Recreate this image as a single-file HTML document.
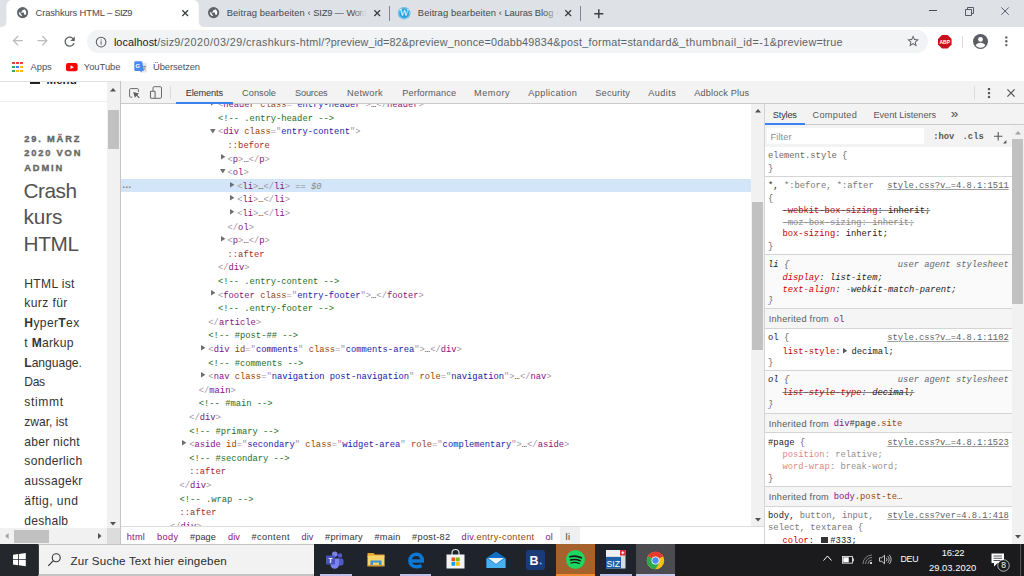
<!DOCTYPE html>
<html lang="de"><head><meta charset="utf-8"><title>Crashkurs HTML – SIZ9</title>
<style>
html,body{margin:0;padding:0;}
body{width:1024px;height:576px;overflow:hidden;position:relative;background:#fff;font-family:"Liberation Sans",sans-serif;}
#root{position:absolute;left:0;top:0;width:1024px;height:576px;overflow:hidden;}
.tg{color:#881280}.br{color:#a894a6}.an{color:#994500}.av{color:#1a1aa6}.cm{color:#236e25}.ps{color:#a52a2a}
.pn{color:#c80000}.pv{color:#222}.gr{color:#888}
svg{position:absolute;overflow:visible}
</style></head>
<body><div id="root">
<div style="position:absolute;left:0px;top:0px;width:1024px;height:27px;background:#dee1e6;"></div>
<svg style="left:0;top:0" width="210" height="27" viewBox="0 0 210 27"><path d="M0 27 C4.200 27 6.500 25 6.500 21 L6.500 6.500 C6.500 2.500 8.500 0 12.500 0 L192.500 0 C196.500 0 198.800 2.500 198.800 6.500 L198.800 21 C198.800 25 201 27 205.200 27 Z" fill="#fff"/></svg>
<div style="position:absolute;left:0px;top:27px;width:1024px;height:54px;background:#fff;"></div>
<div style="position:absolute;left:0px;top:81px;width:120px;height:1px;background:#e0e0e0;"></div>
<svg style="left:16.700000000000003px;top:7.300000000000001px" width="11.2" height="11.2" viewBox="0 0 24 24"><circle cx="12" cy="12" r="12" fill="#5f6368"/><path d="M11 21.9c-4-.5-7-3.900-7-7.900 0-.6.1-1.200.2-1.800L9 17v1c0 1.100.9 2 2 2v1.900zm6.900-2.500c-.3-.8-1-1.400-1.900-1.400h-1v-3c0-.6-.4-1-1-1H8v-2h2c.6 0 1-.4 1-1V9h2c1.100 0 2-.9 2-2v-.4c2.900 1.200 5 4.100 5 7.400 0 2.100-.8 4-2.100 5.400z" fill="#fff" transform="translate(0,-2)"/></svg>
<span id="t1" style="position:absolute;left:35.60px;top:6.12px;line-height:13.16px;font-size:9.4px;color:#45494e;font-family:'Liberation Sans', sans-serif;white-space:pre;letter-spacing:-0.143px;">Crashkurs </span>
<span id="t2" style="position:absolute;left:79.50px;top:6.12px;line-height:13.16px;font-size:9.4px;color:#45494e;font-family:'Liberation Sans', sans-serif;white-space:pre;letter-spacing:-0.056px;">HTML </span>
<span id="t3" style="position:absolute;left:107.00px;top:6.12px;line-height:13.16px;font-size:9.4px;color:#45494e;font-family:'Liberation Sans', sans-serif;white-space:pre;letter-spacing:-0.264px;">– </span>
<span id="t4" style="position:absolute;left:114.30px;top:6.12px;line-height:13.16px;font-size:9.4px;color:#45494e;font-family:'Liberation Sans', sans-serif;white-space:pre;letter-spacing:-0.528px;">SIZ9</span>
<svg style="left:182.10000000000002px;top:9.899999999999999px" width="6.4" height="6.4" viewBox="0 0 10 10"><path d="M0.500 0.500 L9.500 9.500 M9.500 0.500 L0.500 9.500" stroke="#3c4043" stroke-width="2.03" fill="none"/></svg>
<svg style="left:207.5px;top:7.300000000000001px" width="11.2" height="11.2" viewBox="0 0 24 24"><circle cx="12" cy="12" r="12" fill="#5f6368"/><path d="M11 21.9c-4-.5-7-3.900-7-7.900 0-.6.1-1.200.2-1.800L9 17v1c0 1.100.9 2 2 2v1.900zm6.900-2.500c-.3-.8-1-1.400-1.900-1.400h-1v-3c0-.6-.4-1-1-1H8v-2h2c.6 0 1-.4 1-1V9h2c1.100 0 2-.9 2-2v-.4c2.900 1.200 5 4.100 5 7.400 0 2.100-.8 4-2.100 5.400z" fill="#fff" transform="translate(0,-2)"/></svg>
<span id="t5" style="position:absolute;left:226.70px;top:6.12px;line-height:13.16px;font-size:9.4px;color:#45494e;font-family:'Liberation Sans', sans-serif;white-space:pre;letter-spacing:0.098px;">Beitrag </span>
<span id="t6" style="position:absolute;left:259.80px;top:6.12px;line-height:13.16px;font-size:9.4px;color:#45494e;font-family:'Liberation Sans', sans-serif;white-space:pre;letter-spacing:0.071px;">bearbeiten </span>
<span id="t7" style="position:absolute;left:307.50px;top:6.12px;line-height:13.16px;font-size:9.4px;color:#45494e;font-family:'Liberation Sans', sans-serif;white-space:pre;letter-spacing:0.033px;">‹ </span>
<span id="t8" style="position:absolute;left:313.30px;top:6.12px;line-height:13.16px;font-size:9.4px;color:#45494e;font-family:'Liberation Sans', sans-serif;white-space:pre;letter-spacing:-0.241px;">SIZ9 </span>
<span id="t9" style="position:absolute;left:334.50px;top:6.12px;line-height:13.16px;font-size:9.4px;color:#45494e;font-family:'Liberation Sans', sans-serif;white-space:pre;letter-spacing:0.058px;">— </span>
<span id="t10" style="position:absolute;left:346.60px;top:6.12px;line-height:13.16px;font-size:9.4px;color:#45494e;font-family:'Liberation Sans', sans-serif;white-space:pre;letter-spacing:-0.584px;">Wor<span style="color:#9a9da2">d</span></span>
<div style="position:absolute;left:352px;top:4px;width:16px;height:19px;background:linear-gradient(90deg,rgba(222,225,230,0),#dee1e6)"></div>
<svg style="left:373.8px;top:9.899999999999999px" width="6.4" height="6.4" viewBox="0 0 10 10"><path d="M0.500 0.500 L9.500 9.500 M9.500 0.500 L0.500 9.500" stroke="#3c4043" stroke-width="2.03" fill="none"/></svg>
<div style="position:absolute;left:389.2px;top:6px;width:0.9px;height:15px;background:#80868b;"></div>
<svg style="left:398.3px;top:6.8999999999999995px" width="12.4" height="12.4" viewBox="0 0 24 24"><circle cx="12" cy="12" r="12" fill="#2ba3df"/><circle cx="12" cy="12" r="10.600" fill="none" stroke="#fff" stroke-width="0.900"/><text x="12" y="18.300" font-family="Liberation Serif, serif" font-size="19" fill="#fff" text-anchor="middle">W</text></svg>
<span id="t11" style="position:absolute;left:417.80px;top:6.12px;line-height:13.16px;font-size:9.4px;color:#45494e;font-family:'Liberation Sans', sans-serif;white-space:pre;letter-spacing:0.098px;">Beitrag </span>
<span id="t12" style="position:absolute;left:450.90px;top:6.12px;line-height:13.16px;font-size:9.4px;color:#45494e;font-family:'Liberation Sans', sans-serif;white-space:pre;letter-spacing:0.084px;">bearbeiten </span>
<span id="t13" style="position:absolute;left:498.75px;top:6.12px;line-height:13.16px;font-size:9.4px;color:#45494e;font-family:'Liberation Sans', sans-serif;white-space:pre;letter-spacing:0.008px;">‹ </span>
<span id="t14" style="position:absolute;left:504.50px;top:6.12px;line-height:13.16px;font-size:9.4px;color:#45494e;font-family:'Liberation Sans', sans-serif;white-space:pre;letter-spacing:-0.154px;">Lauras </span>
<span id="t15" style="position:absolute;left:534.70px;top:6.12px;line-height:13.16px;font-size:9.4px;color:#45494e;font-family:'Liberation Sans', sans-serif;white-space:pre;letter-spacing:-0.015px;">Blog </span>
<span id="t16" style="position:absolute;left:556.00px;top:6.12px;line-height:13.16px;font-size:9.4px;color:#45494e;font-family:'Liberation Sans', sans-serif;white-space:pre;letter-spacing:-0.125px;">‹</span>
<div style="position:absolute;left:544px;top:4px;width:15px;height:19px;background:linear-gradient(90deg,rgba(222,225,230,0),#dee1e6)"></div>
<svg style="left:564.8px;top:9.899999999999999px" width="6.4" height="6.4" viewBox="0 0 10 10"><path d="M0.500 0.500 L9.500 9.500 M9.500 0.500 L0.500 9.500" stroke="#3c4043" stroke-width="2.03" fill="none"/></svg>
<div style="position:absolute;left:580.2px;top:6px;width:0.9px;height:15px;background:#80868b;"></div>
<svg style="left:593.5px;top:8.500px" width="9.600" height="9.600" viewBox="0 0 10 10"><path d="M5 0.300V9.700M0.300 5H9.700" stroke="#3c4043" stroke-width="1.500"/></svg>
<div style="position:absolute;left:928.5px;top:10.4px;width:8.3px;height:0.9px;background:#4a4d52;"></div>
<svg style="left:964.5px;top:7px" width="9" height="9" viewBox="0 0 9 9"><path d="M0.500 2.500H6.500V8.500H0.500Z M2.500 2.500V0.500H8.500V6.500H6.500" stroke="#4a4d52" stroke-width="0.900" fill="none"/></svg>
<svg style="left:1001.4px;top:7.200000000000001px" width="8.2" height="8.2" viewBox="0 0 10 10"><path d="M0.500 0.500 L9.500 9.500 M9.500 0.500 L0.500 9.500" stroke="#4a4d52" stroke-width="1.10" fill="none"/></svg>
<svg style="left:9.90px;top:33.20px" width="15.400" height="15.400" viewBox="0 0 24 24"><path d="M20 11H7.830l5.590-5.590L12 4l-8 8 8 8 1.410-1.410L7.830 13H20v-2z" fill="#babcbe"/></svg>
<svg style="left:35.30px;top:33.20px" width="15.400" height="15.400" viewBox="0 0 24 24"><path transform="scale(-1,1) translate(-24,0)" d="M20 11H7.830l5.590-5.590L12 4l-8 8 8 8 1.410-1.410L7.830 13H20v-2z" fill="#babcbe"/></svg>
<svg style="left:61.500px;top:33.500px" width="15.400" height="15.400" viewBox="0 0 24 24"><path d="M17.650 6.350C16.200 4.900 14.210 4 12 4c-4.420 0-7.990 3.580-7.990 8s3.570 8 7.990 8c3.730 0 6.840-2.550 7.730-6h-2.080c-.82 2.330-3.040 4-5.650 4-3.310 0-6-2.690-6-6s2.690-6 6-6c1.660 0 3.140.69 4.220 1.780L13 11h7V4l-2.350 2.350z" fill="#5f6368"/></svg>
<div style="position:absolute;left:87px;top:30px;width:840.5px;height:23px;border-radius:11.500px;background:#f1f3f4"></div>
<svg style="left:94.700px;top:35.500px" width="12.200" height="12.200" viewBox="0 0 24 24"><circle cx="12" cy="12" r="9.500" fill="none" stroke="#55585c" stroke-width="2"/><path d="M11 10.500h2V17h-2zM11 7h2v2h-2z" fill="#5f6368"/></svg>
<span id="t17" style="position:absolute;left:113.90px;top:34.74px;line-height:15.12px;font-size:10.8px;color:#202124;font-family:'Liberation Sans', sans-serif;white-space:pre;letter-spacing:0.075px;">localhost</span>
<span id="t18" style="position:absolute;left:157.20px;top:34.74px;line-height:15.12px;font-size:10.8px;color:#5f6368;font-family:'Liberation Sans', sans-serif;white-space:pre;letter-spacing:0.239px;">/siz9</span>
<span id="t19" style="position:absolute;left:180.60px;top:34.74px;line-height:15.12px;font-size:10.8px;color:#5f6368;font-family:'Liberation Sans', sans-serif;white-space:pre;letter-spacing:0.468px;">/2020/03/29</span>
<span id="t20" style="position:absolute;left:242.80px;top:34.74px;line-height:15.12px;font-size:10.8px;color:#5f6368;font-family:'Liberation Sans', sans-serif;white-space:pre;letter-spacing:0.313px;">/crashkurs-html/</span>
<span id="t21" style="position:absolute;left:324.60px;top:34.74px;line-height:15.12px;font-size:10.8px;color:#5f6368;font-family:'Liberation Sans', sans-serif;white-space:pre;letter-spacing:0.083px;">?preview_id=82</span>
<span id="t22" style="position:absolute;left:401.70px;top:34.74px;line-height:15.12px;font-size:10.8px;color:#5f6368;font-family:'Liberation Sans', sans-serif;white-space:pre;letter-spacing:0.213px;">&amp;preview_nonce=0dabb49834</span>
<span id="t23" style="position:absolute;left:553.20px;top:34.74px;line-height:15.12px;font-size:10.8px;color:#5f6368;font-family:'Liberation Sans', sans-serif;white-space:pre;letter-spacing:0.283px;">&amp;post_format=standard</span>
<span id="t24" style="position:absolute;left:671.70px;top:34.74px;line-height:15.12px;font-size:10.8px;color:#5f6368;font-family:'Liberation Sans', sans-serif;white-space:pre;letter-spacing:0.456px;">&amp;_thumbnail_id=-1</span>
<span id="t25" style="position:absolute;left:769.80px;top:34.74px;line-height:15.12px;font-size:10.8px;color:#5f6368;font-family:'Liberation Sans', sans-serif;white-space:pre;letter-spacing:0.282px;">&amp;preview=true</span>
<svg style="left:905.600px;top:34.100px" width="14.200" height="14.200" viewBox="0 0 24 24"><path d="M22 9.240l-7.190-.62L12 2 9.190 8.630 2 9.240l5.460 4.730L5.820 21 12 17.270 18.180 21l-1.630-7.030L22 9.240zM12 15.400l-3.760 2.270 1-4.280-3.320-2.880 4.380-.38L12 6.100l1.710 4.040 4.380.38-3.320 2.880 1 4.280L12 15.400z" fill="#5f6368"/></svg>
<svg style="left:938.300px;top:34.600px" width="13.600" height="13.600" viewBox="0 0 24 24"><path d="M7.030 0H16.970L24 7.030V16.970L16.970 24H7.030L0 16.970V7.030Z" fill="#c8101a"/><text x="12" y="15.800" font-family="Liberation Sans, sans-serif" font-size="10.500" font-weight="bold" fill="#fff" text-anchor="middle" textLength="19" lengthAdjust="spacingAndGlyphs">ABP</text></svg>
<div style="position:absolute;left:962.2px;top:36px;width:0.8px;height:11.5px;background:#dadce0;"></div>
<svg style="left:973px;top:33.800px" width="15" height="15" viewBox="0 0 24 24"><circle cx="12" cy="12" r="12" fill="#5a5e63"/><circle cx="12" cy="8.600" r="3.800" fill="#fff"/><path d="M4.300 18.200C5.500 15.400 8.500 14 12 14s6.500 1.400 7.700 4.200A10 10 0 0 1 12 22a10 10 0 0 1 -7.700 -3.800z" fill="#fff"/></svg>
<svg style="left:1003px;top:34px" width="7" height="15" viewBox="1003 34 7 15"><circle cx="1006.300" cy="37.400" r="1.200" fill="#5f6368"/><circle cx="1006.300" cy="41.200" r="1.200" fill="#5f6368"/><circle cx="1006.300" cy="45.100" r="1.200" fill="#5f6368"/></svg>
<div style="position:absolute;left:11.9px;top:61.6px;width:2.7px;height:2.6px;background:#e94235;"></div>
<div style="position:absolute;left:16.0px;top:61.6px;width:2.7px;height:2.6px;background:#e94235;"></div>
<div style="position:absolute;left:20.1px;top:61.6px;width:2.7px;height:2.6px;background:#e94235;"></div>
<div style="position:absolute;left:11.9px;top:65.55px;width:2.7px;height:2.6px;background:#34a853;"></div>
<div style="position:absolute;left:16.0px;top:65.55px;width:2.7px;height:2.6px;background:#4285f4;"></div>
<div style="position:absolute;left:20.1px;top:65.55px;width:2.7px;height:2.6px;background:#fbbc04;"></div>
<div style="position:absolute;left:11.9px;top:69.5px;width:2.7px;height:2.6px;background:#34a853;"></div>
<div style="position:absolute;left:16.0px;top:69.5px;width:2.7px;height:2.6px;background:#fbbc04;"></div>
<div style="position:absolute;left:20.1px;top:69.5px;width:2.7px;height:2.6px;background:#fbbc04;"></div>
<span id="t26" style="position:absolute;left:30.50px;top:60.42px;line-height:13.16px;font-size:9.4px;color:#4d5156;font-family:'Liberation Sans', sans-serif;white-space:pre;letter-spacing:-0.019px;">Apps</span>
<svg style="left:65.500px;top:63px" width="11.600" height="8.400" viewBox="0 0 28 20"><rect width="28" height="20" rx="5" fill="#f00"/><path d="M11 5.500L19 10L11 14.500Z" fill="#fff"/></svg>
<span id="t27" style="position:absolute;left:83.80px;top:60.42px;line-height:13.16px;font-size:9.4px;color:#4d5156;font-family:'Liberation Sans', sans-serif;white-space:pre;letter-spacing:-0.021px;">YouTube</span>
<svg style="left:134px;top:60.800px" width="13" height="12" viewBox="134 60.800 13 12"><rect x="140.500" y="62.600" width="6.200" height="9.700" rx="0.800" fill="#e6e8ec"/><path d="M142.800 66.300H146M144.400 65.500V66.300M143 69.800Q145 68.500 145.500 66.300M143.300 67.300Q144 69 145.800 69.800" stroke="#7a7d82" stroke-width="0.700" fill="none"/><path d="M135.200 61.100H141.300Q142.100 61.100 142.300 61.900L143.800 70.800L142 70.800L141.300 72.400L140 70.800H135.200Q134.300 70.800 134.300 69.900V62Q134.300 61.100 135.200 61.100Z" fill="#4a8af4"/><text x="137.800" y="68.300" font-family="Liberation Sans, sans-serif" font-size="5.600" font-weight="bold" fill="#fff" text-anchor="middle">G</text></svg>
<span id="t28" style="position:absolute;left:153.00px;top:60.42px;line-height:13.16px;font-size:9.4px;color:#4d5156;font-family:'Liberation Sans', sans-serif;white-space:pre;letter-spacing:-0.095px;">Übersetzen</span>
<div style="position:absolute;left:0;top:82px;width:107px;height:445px;overflow:hidden;background:#fff" id="page">
<div style="position:absolute;left:30px;top:-1px;width:10px;height:3px;background:#222"></div>
<span style="position:absolute;left:46.500px;top:-8.900px;font-size:11.600px;line-height:14px;font-weight:bold;color:#222;font-family:'Liberation Sans', sans-serif;white-space:pre">Menu</span>
<div style="position:absolute;left:0;top:19px;width:107px;height:1px;background:#eee"></div>
</div>
<span id="t29" style="position:absolute;left:24.20px;top:132.89px;line-height:13.02px;font-size:9.3px;color:#666;font-family:'Liberation Sans', sans-serif;white-space:pre;letter-spacing:1.830px;font-weight:bold;-webkit-text-stroke:0.350px #666;">29. MÄRZ</span>
<span id="t30" style="position:absolute;left:24.20px;top:147.24px;line-height:13.02px;font-size:9.3px;color:#666;font-family:'Liberation Sans', sans-serif;white-space:pre;letter-spacing:1.822px;font-weight:bold;-webkit-text-stroke:0.350px #666;">2020 VON</span>
<span id="t31" style="position:absolute;left:24.20px;top:161.59px;line-height:13.02px;font-size:9.3px;color:#666;font-family:'Liberation Sans', sans-serif;white-space:pre;letter-spacing:1.903px;font-weight:bold;-webkit-text-stroke:0.350px #666;">ADMIN</span>
<span id="t32" style="position:absolute;left:23.60px;top:177.90px;line-height:26px;font-size:20.8px;color:#525252;font-family:'Liberation Sans', sans-serif;white-space:pre;letter-spacing:-0.497px;">Crash</span>
<span id="t33" style="position:absolute;left:23.60px;top:204.45px;line-height:26px;font-size:20.8px;color:#525252;font-family:'Liberation Sans', sans-serif;white-space:pre;letter-spacing:-0.199px;">kurs</span>
<span id="t34" style="position:absolute;left:23.60px;top:231.00px;line-height:26px;font-size:20.8px;color:#525252;font-family:'Liberation Sans', sans-serif;white-space:pre;letter-spacing:-0.406px;">HTML</span>
<span id="t35" style="position:absolute;left:24.30px;top:275.50px;line-height:16px;font-size:12.1px;color:#333;font-family:'Liberation Sans', sans-serif;white-space:pre;letter-spacing:0.308px;">HTML ist</span>
<span id="t36" style="position:absolute;left:24.30px;top:295.25px;line-height:16px;font-size:12.1px;color:#333;font-family:'Liberation Sans', sans-serif;white-space:pre;letter-spacing:0.396px;">kurz für</span>
<span id="t37" style="position:absolute;left:24.30px;top:315.00px;line-height:16px;font-size:12.1px;color:#333;font-family:'Liberation Sans', sans-serif;white-space:pre;letter-spacing:0.358px;"><b>H</b>yper<b>T</b>ex</span>
<span id="t38" style="position:absolute;left:24.30px;top:334.75px;line-height:16px;font-size:12.1px;color:#333;font-family:'Liberation Sans', sans-serif;white-space:pre;letter-spacing:0.303px;">t <b>M</b>arkup</span>
<span id="t39" style="position:absolute;left:24.30px;top:354.50px;line-height:16px;font-size:12.1px;color:#333;font-family:'Liberation Sans', sans-serif;white-space:pre;letter-spacing:-0.027px;"><b>L</b>anguage.</span>
<span id="t40" style="position:absolute;left:24.30px;top:374.25px;line-height:16px;font-size:12.1px;color:#333;font-family:'Liberation Sans', sans-serif;white-space:pre;letter-spacing:-0.339px;">Das</span>
<span id="t41" style="position:absolute;left:24.30px;top:394.00px;line-height:16px;font-size:12.1px;color:#333;font-family:'Liberation Sans', sans-serif;white-space:pre;letter-spacing:0.648px;">stimmt</span>
<span id="t42" style="position:absolute;left:24.30px;top:413.75px;line-height:16px;font-size:12.1px;color:#333;font-family:'Liberation Sans', sans-serif;white-space:pre;letter-spacing:-0.021px;">zwar, ist</span>
<span id="t43" style="position:absolute;left:24.30px;top:433.50px;line-height:16px;font-size:12.1px;color:#333;font-family:'Liberation Sans', sans-serif;white-space:pre;letter-spacing:0.248px;">aber nicht</span>
<span id="t44" style="position:absolute;left:24.30px;top:453.25px;line-height:16px;font-size:12.1px;color:#333;font-family:'Liberation Sans', sans-serif;white-space:pre;letter-spacing:0.308px;">sonderlich</span>
<span id="t45" style="position:absolute;left:24.30px;top:473.00px;line-height:16px;font-size:12.1px;color:#333;font-family:'Liberation Sans', sans-serif;white-space:pre;letter-spacing:0.265px;">aussagekr</span>
<span id="t46" style="position:absolute;left:24.30px;top:492.75px;line-height:16px;font-size:12.1px;color:#333;font-family:'Liberation Sans', sans-serif;white-space:pre;letter-spacing:0.423px;">äftig, und</span>
<span id="t47" style="position:absolute;left:24.30px;top:512.50px;line-height:16px;font-size:12.1px;color:#333;font-family:'Liberation Sans', sans-serif;white-space:pre;letter-spacing:0.232px;">deshalb</span>
<div style="position:absolute;left:107px;top:82px;width:13px;height:445.5px;background:#f1f1f1;"></div>
<div style="position:absolute;left:108.3px;top:110.2px;width:10.4px;height:38.8px;background:#c1c1c1;"></div>
<svg style="left:110.400px;top:87.600px" width="6" height="3.600" viewBox="0 0 6 3.600"><path d="M0 3.600L3 0L6 3.600Z" fill="#505050"/></svg>
<svg style="left:110.400px;top:522px" width="6" height="3.600" viewBox="0 0 6 3.600"><path d="M0 0L3 3.600L6 0Z" fill="#505050"/></svg>
<div style="position:absolute;left:0px;top:527.5px;width:107px;height:16.5px;background:#f1f1f1;"></div>
<div style="position:absolute;left:14px;top:530px;width:35px;height:13px;background:#c1c1c1;"></div>
<svg style="left:4.600px;top:532.500px" width="3.600" height="6" viewBox="0 0 3.600 6"><path d="M3.600 0L0 3L3.600 6Z" fill="#a3a3a3"/></svg>
<svg style="left:98.300px;top:532.500px" width="3.600" height="6" viewBox="0 0 3.600 6"><path d="M0 0L3.600 3L0 6Z" fill="#505050"/></svg>
<div style="position:absolute;left:107px;top:527.5px;width:13px;height:16.5px;background:#dcdcdc;"></div>
<div style="position:absolute;left:120px;top:81.3px;width:904px;height:462.7px;background:#fff;"></div>
<div style="position:absolute;left:120px;top:81.3px;width:0.8px;height:462.7px;background:#c4c4c4;"></div>
<div id="tree" style="position:absolute;left:120.8px;top:96px;width:630.500px;height:430.500px;overflow:hidden">
<div style="position:absolute;left:0;top:83.05px;width:631px;height:13.00px;background:#d2e5f9"></div>
<span style="position:absolute;left:1.200px;top:81.95px;font-size:9.500px;line-height:13px;font-weight:bold;color:#777;font-family:'Liberation Sans', sans-serif;letter-spacing:0.2px">…</span>
<span style="position:absolute;left:97.15px;top:3.15px;line-height:13px;font-size:8.800px;font-family:'Liberation Mono', monospace;white-space:pre;color:#222"><span class="br">&lt;</span><span class="tg">header</span> <span class="an">class</span><span class="br">="</span><span class="av">entry-header</span><span class="br">"</span><span class="br">&gt;</span><span style="color:#3a3a3a">…</span><span class="br">&lt;/</span><span class="tg">header</span><span class="br">&gt;</span></span>
<svg style="left:90.15px;top:4.05px" width="4.400" height="5.600" viewBox="0 0 4.400 5.600"><path d="M0 0V5.600L4.400 2.800Z" fill="#6e6e6e"/></svg>
<span style="position:absolute;left:97.15px;top:16.75px;line-height:13px;font-size:8.800px;font-family:'Liberation Mono', monospace;white-space:pre;color:#222"><span class="cm">&lt;!-- .entry-header --&gt;</span></span>
<span style="position:absolute;left:97.15px;top:30.35px;line-height:13px;font-size:8.800px;font-family:'Liberation Mono', monospace;white-space:pre;color:#222"><span class="br">&lt;</span><span class="tg">div</span> <span class="an">class</span><span class="br">="</span><span class="av">entry-content</span><span class="br">"</span><span class="br">&gt;</span></span>
<svg style="left:89.35px;top:32.65px" width="5.600" height="4.400" viewBox="0 0 5.600 4.400"><path d="M0 0H5.600L2.800 4.400Z" fill="#6e6e6e"/></svg>
<span style="position:absolute;left:106.75px;top:43.95px;line-height:13px;font-size:8.800px;font-family:'Liberation Mono', monospace;white-space:pre;color:#222"><span class="ps">::before</span></span>
<span style="position:absolute;left:106.75px;top:57.55px;line-height:13px;font-size:8.800px;font-family:'Liberation Mono', monospace;white-space:pre;color:#222"><span class="br">&lt;</span><span class="tg">p</span><span class="br">&gt;</span><span style="color:#3a3a3a">…</span><span class="br">&lt;/</span><span class="tg">p</span><span class="br">&gt;</span></span>
<svg style="left:99.75px;top:58.45px" width="4.400" height="5.600" viewBox="0 0 4.400 5.600"><path d="M0 0V5.600L4.400 2.800Z" fill="#6e6e6e"/></svg>
<span style="position:absolute;left:106.75px;top:71.15px;line-height:13px;font-size:8.800px;font-family:'Liberation Mono', monospace;white-space:pre;color:#222"><span class="br">&lt;</span><span class="tg">ol</span><span class="br">&gt;</span></span>
<svg style="left:98.95px;top:73.45px" width="5.600" height="4.400" viewBox="0 0 5.600 4.400"><path d="M0 0H5.600L2.800 4.400Z" fill="#6e6e6e"/></svg>
<span style="position:absolute;left:116.35px;top:84.75px;line-height:13px;font-size:8.800px;font-family:'Liberation Mono', monospace;white-space:pre;color:#222"><span class="br">&lt;</span><span class="tg">li</span><span class="br">&gt;</span><span style="color:#3a3a3a">…</span><span class="br">&lt;/</span><span class="tg">li</span><span class="br">&gt;</span><span style="color:#8a8a8a"> == <i>$0</i></span></span>
<svg style="left:109.35px;top:85.65px" width="4.400" height="5.600" viewBox="0 0 4.400 5.600"><path d="M0 0V5.600L4.400 2.800Z" fill="#6e6e6e"/></svg>
<span style="position:absolute;left:116.35px;top:98.35px;line-height:13px;font-size:8.800px;font-family:'Liberation Mono', monospace;white-space:pre;color:#222"><span class="br">&lt;</span><span class="tg">li</span><span class="br">&gt;</span><span style="color:#3a3a3a">…</span><span class="br">&lt;/</span><span class="tg">li</span><span class="br">&gt;</span></span>
<svg style="left:109.35px;top:99.25px" width="4.400" height="5.600" viewBox="0 0 4.400 5.600"><path d="M0 0V5.600L4.400 2.800Z" fill="#6e6e6e"/></svg>
<span style="position:absolute;left:116.35px;top:111.95px;line-height:13px;font-size:8.800px;font-family:'Liberation Mono', monospace;white-space:pre;color:#222"><span class="br">&lt;</span><span class="tg">li</span><span class="br">&gt;</span><span style="color:#3a3a3a">…</span><span class="br">&lt;/</span><span class="tg">li</span><span class="br">&gt;</span></span>
<svg style="left:109.35px;top:112.85px" width="4.400" height="5.600" viewBox="0 0 4.400 5.600"><path d="M0 0V5.600L4.400 2.800Z" fill="#6e6e6e"/></svg>
<span style="position:absolute;left:106.75px;top:125.55px;line-height:13px;font-size:8.800px;font-family:'Liberation Mono', monospace;white-space:pre;color:#222"><span class="br">&lt;/</span><span class="tg">ol</span><span class="br">&gt;</span></span>
<span style="position:absolute;left:106.75px;top:139.15px;line-height:13px;font-size:8.800px;font-family:'Liberation Mono', monospace;white-space:pre;color:#222"><span class="br">&lt;</span><span class="tg">p</span><span class="br">&gt;</span><span style="color:#3a3a3a">…</span><span class="br">&lt;/</span><span class="tg">p</span><span class="br">&gt;</span></span>
<svg style="left:99.75px;top:140.05px" width="4.400" height="5.600" viewBox="0 0 4.400 5.600"><path d="M0 0V5.600L4.400 2.800Z" fill="#6e6e6e"/></svg>
<span style="position:absolute;left:106.75px;top:152.75px;line-height:13px;font-size:8.800px;font-family:'Liberation Mono', monospace;white-space:pre;color:#222"><span class="ps">::after</span></span>
<span style="position:absolute;left:97.15px;top:166.35px;line-height:13px;font-size:8.800px;font-family:'Liberation Mono', monospace;white-space:pre;color:#222"><span class="br">&lt;/</span><span class="tg">div</span><span class="br">&gt;</span></span>
<span style="position:absolute;left:97.15px;top:179.95px;line-height:13px;font-size:8.800px;font-family:'Liberation Mono', monospace;white-space:pre;color:#222"><span class="cm">&lt;!-- .entry-content --&gt;</span></span>
<span style="position:absolute;left:97.15px;top:193.55px;line-height:13px;font-size:8.800px;font-family:'Liberation Mono', monospace;white-space:pre;color:#222"><span class="br">&lt;</span><span class="tg">footer</span> <span class="an">class</span><span class="br">="</span><span class="av">entry-footer</span><span class="br">"</span><span class="br">&gt;</span><span style="color:#3a3a3a">…</span><span class="br">&lt;/</span><span class="tg">footer</span><span class="br">&gt;</span></span>
<svg style="left:90.15px;top:194.45px" width="4.400" height="5.600" viewBox="0 0 4.400 5.600"><path d="M0 0V5.600L4.400 2.800Z" fill="#6e6e6e"/></svg>
<span style="position:absolute;left:97.15px;top:207.15px;line-height:13px;font-size:8.800px;font-family:'Liberation Mono', monospace;white-space:pre;color:#222"><span class="cm">&lt;!-- .entry-footer --&gt;</span></span>
<span style="position:absolute;left:87.55px;top:220.75px;line-height:13px;font-size:8.800px;font-family:'Liberation Mono', monospace;white-space:pre;color:#222"><span class="br">&lt;/</span><span class="tg">article</span><span class="br">&gt;</span></span>
<span style="position:absolute;left:87.55px;top:234.35px;line-height:13px;font-size:8.800px;font-family:'Liberation Mono', monospace;white-space:pre;color:#222"><span class="cm">&lt;!-- #post-## --&gt;</span></span>
<span style="position:absolute;left:87.55px;top:247.95px;line-height:13px;font-size:8.800px;font-family:'Liberation Mono', monospace;white-space:pre;color:#222"><span class="br">&lt;</span><span class="tg">div</span> <span class="an">id</span><span class="br">="</span><span class="av">comments</span><span class="br">"</span> <span class="an">class</span><span class="br">="</span><span class="av">comments-area</span><span class="br">"</span><span class="br">&gt;</span><span style="color:#3a3a3a">…</span><span class="br">&lt;/</span><span class="tg">div</span><span class="br">&gt;</span></span>
<svg style="left:80.55px;top:248.85px" width="4.400" height="5.600" viewBox="0 0 4.400 5.600"><path d="M0 0V5.600L4.400 2.800Z" fill="#6e6e6e"/></svg>
<span style="position:absolute;left:87.55px;top:261.55px;line-height:13px;font-size:8.800px;font-family:'Liberation Mono', monospace;white-space:pre;color:#222"><span class="cm">&lt;!-- #comments --&gt;</span></span>
<span style="position:absolute;left:87.55px;top:275.15px;line-height:13px;font-size:8.800px;font-family:'Liberation Mono', monospace;white-space:pre;color:#222"><span class="br">&lt;</span><span class="tg">nav</span> <span class="an">class</span><span class="br">="</span><span class="av">navigation post-navigation</span><span class="br">"</span> <span class="an">role</span><span class="br">="</span><span class="av">navigation</span><span class="br">"</span><span class="br">&gt;</span><span style="color:#3a3a3a">…</span><span class="br">&lt;/</span><span class="tg">nav</span><span class="br">&gt;</span></span>
<svg style="left:80.55px;top:276.05px" width="4.400" height="5.600" viewBox="0 0 4.400 5.600"><path d="M0 0V5.600L4.400 2.800Z" fill="#6e6e6e"/></svg>
<span style="position:absolute;left:77.95px;top:288.75px;line-height:13px;font-size:8.800px;font-family:'Liberation Mono', monospace;white-space:pre;color:#222"><span class="br">&lt;/</span><span class="tg">main</span><span class="br">&gt;</span></span>
<span style="position:absolute;left:77.95px;top:302.35px;line-height:13px;font-size:8.800px;font-family:'Liberation Mono', monospace;white-space:pre;color:#222"><span class="cm">&lt;!-- #main --&gt;</span></span>
<span style="position:absolute;left:68.35px;top:315.95px;line-height:13px;font-size:8.800px;font-family:'Liberation Mono', monospace;white-space:pre;color:#222"><span class="br">&lt;/</span><span class="tg">div</span><span class="br">&gt;</span></span>
<span style="position:absolute;left:68.35px;top:329.55px;line-height:13px;font-size:8.800px;font-family:'Liberation Mono', monospace;white-space:pre;color:#222"><span class="cm">&lt;!-- #primary --&gt;</span></span>
<span style="position:absolute;left:68.35px;top:343.15px;line-height:13px;font-size:8.800px;font-family:'Liberation Mono', monospace;white-space:pre;color:#222"><span class="br">&lt;</span><span class="tg">aside</span> <span class="an">id</span><span class="br">="</span><span class="av">secondary</span><span class="br">"</span> <span class="an">class</span><span class="br">="</span><span class="av">widget-area</span><span class="br">"</span> <span class="an">role</span><span class="br">="</span><span class="av">complementary</span><span class="br">"</span><span class="br">&gt;</span><span style="color:#3a3a3a">…</span><span class="br">&lt;/</span><span class="tg">aside</span><span class="br">&gt;</span></span>
<svg style="left:61.35px;top:344.05px" width="4.400" height="5.600" viewBox="0 0 4.400 5.600"><path d="M0 0V5.600L4.400 2.800Z" fill="#6e6e6e"/></svg>
<span style="position:absolute;left:68.35px;top:356.75px;line-height:13px;font-size:8.800px;font-family:'Liberation Mono', monospace;white-space:pre;color:#222"><span class="cm">&lt;!-- #secondary --&gt;</span></span>
<span style="position:absolute;left:68.35px;top:370.35px;line-height:13px;font-size:8.800px;font-family:'Liberation Mono', monospace;white-space:pre;color:#222"><span class="ps">::after</span></span>
<span style="position:absolute;left:58.75px;top:383.95px;line-height:13px;font-size:8.800px;font-family:'Liberation Mono', monospace;white-space:pre;color:#222"><span class="br">&lt;/</span><span class="tg">div</span><span class="br">&gt;</span></span>
<span style="position:absolute;left:58.75px;top:397.55px;line-height:13px;font-size:8.800px;font-family:'Liberation Mono', monospace;white-space:pre;color:#222"><span class="cm">&lt;!-- .wrap --&gt;</span></span>
<span style="position:absolute;left:58.75px;top:411.15px;line-height:13px;font-size:8.800px;font-family:'Liberation Mono', monospace;white-space:pre;color:#222"><span class="ps">::after</span></span>
<span style="position:absolute;left:49.15px;top:424.75px;line-height:13px;font-size:8.800px;font-family:'Liberation Mono', monospace;white-space:pre;color:#222"><span class="br">&lt;/</span><span class="tg">div</span><span class="br">&gt;</span></span>
</div>
<div style="position:absolute;left:751px;top:104px;width:13px;height:422px;background:#f1f1f1;"></div>
<div style="position:absolute;left:752px;top:202px;width:11px;height:148px;background:#c1c1c1;"></div>
<svg style="left:754.600px;top:109.200px" width="6" height="3.600" viewBox="0 0 6 3.600"><path d="M0 3.600L3 0L6 3.600Z" fill="#505050"/></svg>
<svg style="left:754.600px;top:517.500px" width="6" height="3.600" viewBox="0 0 6 3.600"><path d="M0 0L3 3.600L6 0Z" fill="#505050"/></svg>
<div style="position:absolute;left:120.8px;top:81.3px;width:903.2px;height:22px;background:#f3f3f3;"></div>
<div style="position:absolute;left:120.8px;top:103.1px;width:903.2px;height:0.8px;background:#cbcbcb;"></div>
<svg style="left:126px;top:84px" width="40" height="18" viewBox="126 84 40 18"><path d="M138.400 92V89.600Q138.400 88.600 137.400 88.600H130.600Q129.600 88.600 129.600 89.600V96.200Q129.600 97.200 130.600 97.200H132.200" fill="none" stroke="#6a6a6a" stroke-width="1"/><path d="M133.100 92.100L139.100 93.600L137.300 95L139.700 97.400L138.900 98.200L136.500 95.800L134.900 97.800Z" fill="#5e5e5e"/><rect x="153" y="86.700" width="8.500" height="11.600" rx="1.200" fill="none" stroke="#6a6a6a" stroke-width="1"/><rect x="150.500" y="91.300" width="4.600" height="7" rx="0.800" fill="#f3f3f3" stroke="#6a6a6a" stroke-width="1.100"/></svg>
<div style="position:absolute;left:170.4px;top:86px;width:0.8px;height:12.8px;background:#dadada;"></div>
<span id="t48" style="position:absolute;left:185.70px;top:87.06px;line-height:12.88px;font-size:9.2px;color:#333;font-family:'Liberation Sans', sans-serif;white-space:pre;letter-spacing:-0.139px;">Elements</span>
<span id="t49" style="position:absolute;left:242.10px;top:87.06px;line-height:12.88px;font-size:9.2px;color:#5a5a5a;font-family:'Liberation Sans', sans-serif;white-space:pre;letter-spacing:0.026px;">Console</span>
<span id="t50" style="position:absolute;left:295.00px;top:87.06px;line-height:12.88px;font-size:9.2px;color:#5a5a5a;font-family:'Liberation Sans', sans-serif;white-space:pre;letter-spacing:-0.174px;">Sources</span>
<span id="t51" style="position:absolute;left:347.00px;top:87.06px;line-height:12.88px;font-size:9.2px;color:#5a5a5a;font-family:'Liberation Sans', sans-serif;white-space:pre;letter-spacing:0.328px;">Network</span>
<span id="t52" style="position:absolute;left:402.20px;top:87.06px;line-height:12.88px;font-size:9.2px;color:#5a5a5a;font-family:'Liberation Sans', sans-serif;white-space:pre;letter-spacing:0.136px;">Performance</span>
<span id="t53" style="position:absolute;left:474.00px;top:87.06px;line-height:12.88px;font-size:9.2px;color:#5a5a5a;font-family:'Liberation Sans', sans-serif;white-space:pre;letter-spacing:0.502px;">Memory</span>
<span id="t54" style="position:absolute;left:528.20px;top:87.06px;line-height:12.88px;font-size:9.2px;color:#5a5a5a;font-family:'Liberation Sans', sans-serif;white-space:pre;letter-spacing:0.368px;">Application</span>
<span id="t55" style="position:absolute;left:595.20px;top:87.06px;line-height:12.88px;font-size:9.2px;color:#5a5a5a;font-family:'Liberation Sans', sans-serif;white-space:pre;letter-spacing:0.225px;">Security</span>
<span id="t56" style="position:absolute;left:648.30px;top:87.06px;line-height:12.88px;font-size:9.2px;color:#5a5a5a;font-family:'Liberation Sans', sans-serif;white-space:pre;letter-spacing:0.409px;">Audits</span>
<span id="t57" style="position:absolute;left:694.20px;top:87.06px;line-height:12.88px;font-size:9.2px;color:#5a5a5a;font-family:'Liberation Sans', sans-serif;white-space:pre;letter-spacing:0.156px;">Adblock Plus</span>
<div style="position:absolute;left:176px;top:102.2px;width:56.8px;height:1.7px;background:#3b82f0;"></div>
<div style="position:absolute;left:974px;top:86px;width:0.8px;height:12.8px;background:#dadada;"></div>
<svg style="left:985px;top:85px" width="8" height="16" viewBox="985 85 8 16"><rect x="987.900" y="88" width="2.200" height="2.200" fill="#5a5a5a"/><rect x="987.900" y="92" width="2.200" height="2.200" fill="#5a5a5a"/><rect x="987.900" y="95.900" width="2.200" height="2.200" fill="#5a5a5a"/></svg>
<svg style="left:1007.2px;top:88.8px" width="8" height="8" viewBox="0 0 10 10"><path d="M0.500 0.500 L9.500 9.500 M9.500 0.500 L0.500 9.500" stroke="#555" stroke-width="1.62" fill="none"/></svg>
<div style="position:absolute;left:120.8px;top:526.3px;width:643.8px;height:17.7px;background:#fff;"></div>
<div style="position:absolute;left:120.8px;top:526.3px;width:643.8px;height:0.8px;background:#dcdcdc;"></div>
<div style="position:absolute;left:560px;top:527.1px;width:20px;height:16.9px;background:#f0f0f0;"></div>
<span id="t58" style="position:absolute;left:126.80px;top:530.96px;line-height:12.88px;font-size:9.2px;color:#881280;font-family:'Liberation Sans', sans-serif;white-space:pre;letter-spacing:0.210px;">html</span>
<span id="t59" style="position:absolute;left:157.00px;top:530.96px;line-height:12.88px;font-size:9.2px;color:#881280;font-family:'Liberation Sans', sans-serif;white-space:pre;letter-spacing:0.391px;">body</span>
<span id="t60" style="position:absolute;left:190.00px;top:530.96px;line-height:12.88px;font-size:9.2px;color:#333;font-family:'Liberation Sans', sans-serif;white-space:pre;letter-spacing:0.087px;">#page</span>
<span id="t61" style="position:absolute;left:228.00px;top:530.96px;line-height:12.88px;font-size:9.2px;color:#881280;font-family:'Liberation Sans', sans-serif;white-space:pre;letter-spacing:0.083px;">div</span>
<span id="t62" style="position:absolute;left:251.50px;top:530.96px;line-height:12.88px;font-size:9.2px;color:#333;font-family:'Liberation Sans', sans-serif;white-space:pre;letter-spacing:0.406px;">#content</span>
<span id="t63" style="position:absolute;left:301.50px;top:530.96px;line-height:12.88px;font-size:9.2px;color:#881280;font-family:'Liberation Sans', sans-serif;white-space:pre;letter-spacing:0.083px;">div</span>
<span id="t64" style="position:absolute;left:325.00px;top:530.96px;line-height:12.88px;font-size:9.2px;color:#333;font-family:'Liberation Sans', sans-serif;white-space:pre;letter-spacing:0.281px;">#primary</span>
<span id="t65" style="position:absolute;left:374.50px;top:530.96px;line-height:12.88px;font-size:9.2px;color:#333;font-family:'Liberation Sans', sans-serif;white-space:pre;letter-spacing:0.194px;">#main</span>
<span id="t66" style="position:absolute;left:412.00px;top:530.96px;line-height:12.88px;font-size:9.2px;color:#333;font-family:'Liberation Sans', sans-serif;white-space:pre;letter-spacing:0.342px;">#post-82</span>
<span id="t67" style="position:absolute;left:461.50px;top:530.96px;line-height:12.88px;font-size:9.2px;color:#333;font-family:'Liberation Sans', sans-serif;white-space:pre;letter-spacing:0.338px;"><span style="color:#881280">div</span><span style="color:#994500">.entry-content</span></span>
<span id="t68" style="position:absolute;left:545.50px;top:530.96px;line-height:12.88px;font-size:9.2px;color:#881280;font-family:'Liberation Sans', sans-serif;white-space:pre;letter-spacing:0.172px;">ol</span>
<span id="t69" style="position:absolute;left:565.50px;top:530.96px;line-height:12.88px;font-size:9.2px;color:#333;font-family:'Liberation Sans', sans-serif;white-space:pre;letter-spacing:0.453px;">li</span>
<div style="position:absolute;left:764px;top:104px;width:260px;height:440px;background:#fff;"></div>
<div style="position:absolute;left:764px;top:104px;width:1px;height:440px;background:#d4d4d4;"></div>
<div style="position:absolute;left:765px;top:104px;width:259px;height:20px;background:#f3f3f3;"></div>
<div style="position:absolute;left:765px;top:124px;width:259px;height:1px;background:#cbcbcb;"></div>
<span id="t70" style="position:absolute;left:772.80px;top:108.86px;line-height:12.88px;font-size:9.2px;color:#333;font-family:'Liberation Sans', sans-serif;white-space:pre;letter-spacing:-0.172px;">Styles</span>
<span id="t71" style="position:absolute;left:812.60px;top:108.86px;line-height:12.88px;font-size:9.2px;color:#5a5a5a;font-family:'Liberation Sans', sans-serif;white-space:pre;letter-spacing:0.264px;">Computed</span>
<span id="t72" style="position:absolute;left:873.50px;top:108.86px;line-height:12.88px;font-size:9.2px;color:#5a5a5a;font-family:'Liberation Sans', sans-serif;white-space:pre;letter-spacing:-0.055px;">Event Listeners</span>
<span id="t73" style="position:absolute;left:950.80px;top:104.95px;line-height:18.9px;font-size:13.5px;color:#4a4a4a;font-family:'Liberation Sans', sans-serif;white-space:pre;letter-spacing:-0.016px;">»</span>
<div style="position:absolute;left:765.4px;top:123.4px;width:39.5px;height:1.7px;background:#3b82f0;"></div>
<div style="position:absolute;left:765px;top:125px;width:247px;height:22px;background:#f3f3f3;"></div>
<div style="position:absolute;left:767.3px;top:128px;width:156.3px;height:16px;background:#fff;"></div>
<span id="t74" style="position:absolute;left:770.60px;top:130.86px;line-height:12.88px;font-size:9.2px;color:#8c8c8c;font-family:'Liberation Sans', sans-serif;white-space:pre;letter-spacing:0.096px;">Filter</span>
<span id="t75" style="position:absolute;left:933.20px;top:131.04px;line-height:12.32px;font-size:8.8px;color:#585858;font-family:'Liberation Mono', monospace;white-space:pre;font-weight:bold;">:hov</span>
<span id="t76" style="position:absolute;left:962.60px;top:131.04px;line-height:12.32px;font-size:8.8px;color:#585858;font-family:'Liberation Mono', monospace;white-space:pre;font-weight:bold;">.cls</span>
<svg style="left:993.600px;top:132px" width="8.400" height="8.400" viewBox="0 0 10 10"><path d="M5 0V10M0 5H10" stroke="#555" stroke-width="1.300"/></svg>
<svg style="left:1002.500px;top:140px" width="3.400" height="3.400" viewBox="0 0 4 4"><path d="M4 0V4H0Z" fill="#555"/></svg>
<div style="position:absolute;left:1012px;top:125px;width:12px;height:419px;background:#f1f1f1;"></div>
<div style="position:absolute;left:1012px;top:139px;width:11px;height:165px;background:#c1c1c1;"></div>
<svg style="left:1014.600px;top:130.600px" width="6" height="3.600" viewBox="0 0 6 3.600"><path d="M0 3.600L3 0L6 3.600Z" fill="#a3a3a3"/></svg>
<svg style="left:1014.800px;top:535.400px" width="6" height="3.600" viewBox="0 0 6 3.600"><path d="M0 0L3 3.600L6 0Z" fill="#505050"/></svg>
<span id="t77" style="position:absolute;left:768.10px;top:150.30px;line-height:12px;font-size:8.8px;color:#666;font-family:'Liberation Mono', monospace;white-space:pre;">element.style {</span>
<span id="t78" style="position:absolute;left:768.10px;top:163.40px;line-height:12px;font-size:8.8px;color:#666;font-family:'Liberation Mono', monospace;white-space:pre;">}</span>
<div style="position:absolute;left:765px;top:176px;width:247px;height:1px;background:#d4d4d4;"></div>
<span id="t79" style="position:absolute;left:768.10px;top:180.40px;line-height:12px;font-size:8.8px;color:#222;font-family:'Liberation Mono', monospace;white-space:pre;">*, <span style="color:#777">*:before, *:after</span></span>
<span style="position:absolute;right:15.30px;top:180.40px;line-height:12px;font-size:8.800px;color:#5f5f5f;font-family:'Liberation Mono', monospace;white-space:pre;text-decoration:underline;text-decoration-thickness:0.600px;text-decoration-color:rgba(95,95,95,0.600);">style.css?v…=4.8.1:1511</span>
<span id="t80" style="position:absolute;left:768.10px;top:192.80px;line-height:12px;font-size:8.8px;color:#666;font-family:'Liberation Mono', monospace;white-space:pre;">{</span>
<span id="t81" style="position:absolute;left:782.40px;top:205.10px;line-height:12px;font-size:8.8px;color:#222;font-family:'Liberation Mono', monospace;white-space:pre;"><span style="text-decoration:line-through;text-decoration-color:rgba(50,50,50,0.600);text-decoration-thickness:0.650px;"><span class="pn">-webkit-box-sizing</span><span class="pv">: inherit;</span></span></span>
<span id="t82" style="position:absolute;left:782.40px;top:217.20px;line-height:12px;font-size:8.8px;color:#222;font-family:'Liberation Mono', monospace;white-space:pre;"><span style="text-decoration:line-through;text-decoration-thickness:0.650px;text-decoration-color:rgba(120,120,120,0.600);color:#8a8a8a">-moz-box-sizing: inherit;</span></span>
<span id="t83" style="position:absolute;left:782.40px;top:228.40px;line-height:12px;font-size:8.8px;color:#222;font-family:'Liberation Mono', monospace;white-space:pre;"><span style=""><span class="pn">box-sizing</span><span class="pv">: inherit;</span></span></span>
<span id="t84" style="position:absolute;left:768.10px;top:240.80px;line-height:12px;font-size:8.8px;color:#666;font-family:'Liberation Mono', monospace;white-space:pre;">}</span>
<div style="position:absolute;left:765px;top:254px;width:247px;height:1px;background:#d4d4d4;"></div>
<div style="position:absolute;left:765px;top:255px;width:247px;height:53px;background:#fafafa;"></div>
<span id="t85" style="position:absolute;left:768.10px;top:258.60px;line-height:12px;font-size:8.8px;color:#222;font-family:'Liberation Mono', monospace;white-space:pre;font-style:italic;">li <span style="color:#666">{</span></span>
<span style="position:absolute;right:15.30px;top:258.60px;line-height:12px;font-size:8.800px;color:#666;font-family:'Liberation Mono', monospace;white-space:pre;font-style:italic;">user agent stylesheet</span>
<span id="t86" style="position:absolute;left:782.40px;top:271.50px;line-height:12px;font-size:8.8px;color:#222;font-family:'Liberation Mono', monospace;white-space:pre;"><span style="font-style:italic;"><span class="pn">display</span><span class="pv">: list-item;</span></span></span>
<span id="t87" style="position:absolute;left:782.40px;top:283.80px;line-height:12px;font-size:8.8px;color:#222;font-family:'Liberation Mono', monospace;white-space:pre;"><span style="font-style:italic;"><span class="pn">text-align</span><span class="pv">: -webkit-match-parent;</span></span></span>
<span id="t88" style="position:absolute;left:768.10px;top:295.10px;line-height:12px;font-size:8.8px;color:#666;font-family:'Liberation Mono', monospace;white-space:pre;font-style:italic;">}</span>
<div style="position:absolute;left:765px;top:308px;width:247px;height:1px;background:#d4d4d4;"></div>
<div style="position:absolute;left:765px;top:309px;width:247px;height:19px;background:#f5f5f5;"></div>
<span id="t89" style="position:absolute;left:768.70px;top:312.96px;line-height:12.88px;font-size:9.2px;color:#5a5a5a;font-family:'Liberation Sans', sans-serif;white-space:pre;letter-spacing:0.258px;">Inherited from</span>
<span id="t90" style="position:absolute;left:833.70px;top:313.60px;line-height:12px;font-size:8.8px;color:#881280;font-family:'Liberation Mono', monospace;white-space:pre;">ol</span>
<div style="position:absolute;left:765px;top:328px;width:247px;height:1px;background:#d4d4d4;"></div>
<span id="t91" style="position:absolute;left:768.10px;top:332.10px;line-height:12px;font-size:8.8px;color:#222;font-family:'Liberation Mono', monospace;white-space:pre;">ol <span style="color:#666">{</span></span>
<span style="position:absolute;right:15.30px;top:332.10px;line-height:12px;font-size:8.800px;color:#5f5f5f;font-family:'Liberation Mono', monospace;white-space:pre;text-decoration:underline;text-decoration-thickness:0.600px;text-decoration-color:rgba(95,95,95,0.600);">style.css?v…=4.8.1:1102</span>
<span id="t92" style="position:absolute;left:782.40px;top:345.60px;line-height:12px;font-size:8.8px;color:#222;font-family:'Liberation Mono', monospace;white-space:pre;"><span class="pn">list-style</span><span class="pv">:</span><span style="display:inline-block;width:11px;height:5px;position:relative"><svg style="left:2.300px;top:-0.500px" width="4.200" height="5.400" viewBox="0 0 4.200 5.400"><path d="M0 0V5.400L4.200 2.700Z" fill="#555"/></svg></span><span class="pv">decimal;</span></span>
<span id="t93" style="position:absolute;left:768.10px;top:357.30px;line-height:12px;font-size:8.8px;color:#666;font-family:'Liberation Mono', monospace;white-space:pre;">}</span>
<div style="position:absolute;left:765px;top:370px;width:247px;height:1px;background:#d4d4d4;"></div>
<div style="position:absolute;left:765px;top:371px;width:247px;height:42px;background:#fafafa;"></div>
<span id="t94" style="position:absolute;left:768.10px;top:374.30px;line-height:12px;font-size:8.8px;color:#222;font-family:'Liberation Mono', monospace;white-space:pre;font-style:italic;">ol <span style="color:#666">{</span></span>
<span style="position:absolute;right:15.30px;top:374.30px;line-height:12px;font-size:8.800px;color:#666;font-family:'Liberation Mono', monospace;white-space:pre;font-style:italic;">user agent stylesheet</span>
<span id="t95" style="position:absolute;left:782.40px;top:387.00px;line-height:12px;font-size:8.8px;color:#222;font-family:'Liberation Mono', monospace;white-space:pre;"><span style="text-decoration:line-through;text-decoration-color:rgba(50,50,50,0.600);text-decoration-thickness:0.650px;font-style:italic;"><span class="pn">list-style-type</span><span class="pv">: decimal;</span></span></span>
<span id="t96" style="position:absolute;left:768.10px;top:398.50px;line-height:12px;font-size:8.8px;color:#666;font-family:'Liberation Mono', monospace;white-space:pre;font-style:italic;">}</span>
<div style="position:absolute;left:765px;top:413px;width:247px;height:1px;background:#d4d4d4;"></div>
<div style="position:absolute;left:765px;top:414px;width:247px;height:18px;background:#f5f5f5;"></div>
<span id="t97" style="position:absolute;left:768.70px;top:417.76px;line-height:12.88px;font-size:9.2px;color:#5a5a5a;font-family:'Liberation Sans', sans-serif;white-space:pre;letter-spacing:0.258px;">Inherited from</span>
<span id="t98" style="position:absolute;left:833.70px;top:418.40px;line-height:12px;font-size:8.8px;color:#222;font-family:'Liberation Mono', monospace;white-space:pre;"><span style="color:#881280">div</span><span style="color:#333">#page</span><span style="color:#994500">.site</span></span>
<div style="position:absolute;left:765px;top:432px;width:247px;height:1px;background:#d4d4d4;"></div>
<span id="t99" style="position:absolute;left:768.10px;top:436.60px;line-height:12px;font-size:8.8px;color:#222;font-family:'Liberation Mono', monospace;white-space:pre;">#page <span style="color:#666">{</span></span>
<span style="position:absolute;right:15.30px;top:436.60px;line-height:12px;font-size:8.800px;color:#5f5f5f;font-family:'Liberation Mono', monospace;white-space:pre;text-decoration:underline;text-decoration-thickness:0.600px;text-decoration-color:rgba(95,95,95,0.600);">style.css?v…=4.8.1:1523</span>
<span id="t100" style="position:absolute;left:782.40px;top:449.20px;line-height:12px;font-size:8.8px;color:#222;font-family:'Liberation Mono', monospace;white-space:pre;"><span style="opacity:0.5;"><span class="pn">position</span><span class="pv">: relative;</span></span></span>
<span id="t101" style="position:absolute;left:782.40px;top:461.30px;line-height:12px;font-size:8.8px;color:#222;font-family:'Liberation Mono', monospace;white-space:pre;"><span style="opacity:0.5;"><span class="pn">word-wrap</span><span class="pv">: break-word;</span></span></span>
<span id="t102" style="position:absolute;left:768.10px;top:473.10px;line-height:12px;font-size:8.8px;color:#666;font-family:'Liberation Mono', monospace;white-space:pre;">}</span>
<div style="position:absolute;left:765px;top:486px;width:247px;height:1px;background:#d4d4d4;"></div>
<div style="position:absolute;left:765px;top:487px;width:247px;height:19px;background:#f5f5f5;"></div>
<span id="t103" style="position:absolute;left:768.70px;top:490.66px;line-height:12.88px;font-size:9.2px;color:#5a5a5a;font-family:'Liberation Sans', sans-serif;white-space:pre;letter-spacing:0.258px;">Inherited from</span>
<span id="t104" style="position:absolute;left:833.70px;top:491.30px;line-height:12px;font-size:8.8px;color:#222;font-family:'Liberation Mono', monospace;white-space:pre;"><span style="color:#881280">body</span><span style="color:#994500">.post-te…</span></span>
<div style="position:absolute;left:765px;top:506px;width:247px;height:1px;background:#d4d4d4;"></div>
<span id="t105" style="position:absolute;left:768.10px;top:510.10px;line-height:12px;font-size:8.8px;color:#222;font-family:'Liberation Mono', monospace;white-space:pre;">body, <span style="color:#777">button, input,</span></span>
<span style="position:absolute;right:15.30px;top:510.10px;line-height:12px;font-size:8.800px;color:#5f5f5f;font-family:'Liberation Mono', monospace;white-space:pre;text-decoration:underline;text-decoration-thickness:0.600px;text-decoration-color:rgba(95,95,95,0.600);">style.css?ver=4.8.1:418</span>
<span id="t106" style="position:absolute;left:768.10px;top:521.60px;line-height:12px;font-size:8.8px;color:#222;font-family:'Liberation Mono', monospace;white-space:pre;"><span style="color:#777">select, textarea {</span></span>
<span id="t107" style="position:absolute;left:782.40px;top:534.80px;line-height:12px;font-size:8.8px;color:#222;font-family:'Liberation Mono', monospace;white-space:pre;"><span class="pn">color</span><span class="pv">: <span style="display:inline-block;width:6.400px;height:6.400px;background:#333;margin:0 2.600px 0 2px;vertical-align:-0.5px"></span>#333;</span></span>
<div style="position:absolute;left:0px;top:544.2px;width:1024px;height:32px;background:#1f232c;"></div>
<div style="position:absolute;left:675px;top:544.2px;width:349px;height:32px;background:#1b1b1e;"></div>
<div style="position:absolute;left:0px;top:544px;width:38px;height:32px;background:#24272b;"></div>
<svg style="left:13px;top:553.300px" width="12.800" height="13.200" viewBox="0 0 128 132"><path d="M0 18L52 11V63H0Z M60 10L128 0V63H60Z M0 71H52V123L0 116Z M60 71H128V132L60 122Z" fill="#fff"/></svg>
<div style="position:absolute;left:38px;top:544px;width:276px;height:32px;background:#f2f2f2;box-sizing:border-box;border-top:1px solid #c4c4c4;border-bottom:2px solid #c4c4c4;border-left:1px solid #3a3d42;"></div>
<svg style="left:47px;top:552px" width="16" height="16" viewBox="47 552 16 16"><circle cx="56.250" cy="557.800" r="4" fill="none" stroke="#333" stroke-width="1.100"/><path d="M53.400 560.700L48.300 565.900" stroke="#333" stroke-width="1.200"/></svg>
<span id="t108" style="position:absolute;left:70.50px;top:552.88px;line-height:16.24px;font-size:11.6px;color:#2b2b2b;font-family:'Liberation Sans', sans-serif;white-space:pre;letter-spacing:0.188px;">Zur Suche Text hier eingeben</span>
<svg style="left:325px;top:549.500px" width="20" height="20" viewBox="0 0 40 40"><circle cx="30" cy="11" r="4.500" fill="#5059c9"/><rect x="24" y="17" width="13" height="14" rx="4" fill="#5059c9"/><circle cx="19.500" cy="8.500" r="5.500" fill="#7b83eb"/><path d="M11 17H28V29A8.500 8.500 0 0 1 11 29Z" fill="#7b83eb"/><rect x="2" y="11" width="18" height="18" rx="2" fill="#4b53bc"/><text x="11" y="25" font-family="Liberation Sans, sans-serif" font-weight="bold" font-size="13" fill="#fff" text-anchor="middle">T</text></svg>
<div style="position:absolute;left:320px;top:574px;width:31.5px;height:2px;background:#bdbfe8;"></div>
<svg style="left:366.500px;top:550.500px" width="18" height="17" viewBox="0 0 36 34"><path d="M1 4H13L16 7H35V12H1Z" fill="#e9a52a"/><rect x="1" y="9" width="34" height="21" rx="1" fill="#f8d56b"/><rect x="7" y="19" width="22" height="11" fill="#3b8fd9"/><rect x="12" y="23" width="12" height="7" fill="#f8d56b"/><rect x="1" y="28" width="34" height="3" fill="#d8992b"/></svg>
<svg style="left:405.500px;top:549.800px" width="20" height="20" viewBox="0 0 40 40"><path d="M10 22H32.500C33 13 27.500 8.500 20.500 8.500C13 8.500 8 14.500 8 21.500C8 29 13.500 33.500 21 33.500C25 33.500 28.500 32.500 31 31" fill="none" stroke="#0b78d4" stroke-width="7.400"/></svg>
<div style="position:absolute;left:399.5px;top:574px;width:31.5px;height:2px;background:#bdbfe8;"></div>
<svg style="left:446px;top:549px" width="19" height="21" viewBox="0 0 38 42"><path d="M12 12V8a7 7 0 0 1 14 0V12" fill="none" stroke="#e8e8e8" stroke-width="2.200"/><path d="M1 11H37V39H1Z" fill="#f4f4f4"/><rect x="11" y="17" width="7.500" height="7.500" fill="#f25022"/><rect x="20" y="17" width="7.500" height="7.500" fill="#7fba00"/><rect x="11" y="26" width="7.500" height="7.500" fill="#00a4ef"/><rect x="20" y="26" width="7.500" height="7.500" fill="#ffb900"/></svg>
<svg style="left:485.500px;top:551px" width="20" height="18" viewBox="0 0 40 36"><path d="M1 14L20 1L39 14V34H1Z" fill="#0f6fc4"/><path d="M1 14L20 27L39 14V34H1Z" fill="#48b0f0"/><path d="M4 14H36L20 26Z" fill="#e8f4fc"/></svg>
<svg style="left:525.500px;top:550px" width="19" height="20" viewBox="0 0 38 40"><rect width="38" height="40" rx="6" fill="#1a3a78"/><text x="16" y="29" font-family="Liberation Sans, sans-serif" font-weight="bold" font-size="25" fill="#fff" text-anchor="middle">B</text><circle cx="29.500" cy="27" r="2.200" fill="#4fb6f0"/></svg>
<div style="position:absolute;left:556.2px;top:544.2px;width:38.8px;height:32px;background:#a5622c;"></div>
<div style="position:absolute;left:556.2px;top:574px;width:38.8px;height:2px;background:#f28a30;"></div>
<svg style="left:565.500px;top:550.300px" width="19" height="19" viewBox="0 0 38 38"><circle cx="19" cy="19" r="19" fill="#1ed760"/><path d="M8 13.500Q19 10 30.500 15.500" stroke="#181818" stroke-width="3.600" fill="none" stroke-linecap="round"/><path d="M9 20Q19 17 28.500 21.500" stroke="#181818" stroke-width="3" fill="none" stroke-linecap="round"/><path d="M10 26Q18.500 23.500 26.500 27" stroke="#181818" stroke-width="2.500" fill="none" stroke-linecap="round"/></svg>
<svg style="left:605.500px;top:550px" width="19.500" height="18.500" viewBox="0 0 39 37"><rect x="0" y="0" width="39" height="37" fill="#d8dce0"/><rect x="0" y="0" width="28" height="12" fill="#eef0f2"/><rect x="0" y="14" width="30" height="23" fill="#1f5fa8"/><rect x="28" y="0" width="11" height="11" fill="#e0262d"/><path d="M33.500 2.500V8.500M30.500 5.500H36.500" stroke="#fff" stroke-width="2.200"/><text x="14.500" y="33" font-family="Liberation Sans, sans-serif" font-size="18" fill="#fff" text-anchor="middle" textLength="27" lengthAdjust="spacingAndGlyphs">SIZ</text></svg>
<div style="position:absolute;left:599.5px;top:574px;width:32.5px;height:2px;background:#bdbfe8;"></div>
<div style="position:absolute;left:636px;top:544.2px;width:39px;height:32px;background:#4b4b50;"></div>
<div style="position:absolute;left:636px;top:574px;width:39px;height:2px;background:#c9cbf0;"></div>
<svg style="left:645.500px;top:550.500px" width="19" height="19" viewBox="0 0 48 48"><circle cx="24" cy="24" r="22" fill="#fbc116"/><path d="M24 24L4.950 13A22 22 0 0 1 43.050 13Z" fill="#e33b2e"/><path d="M24 2A22 22 0 0 1 43.050 13H24Z" fill="#e33b2e"/><path d="M24 24L4.950 13A22 22 0 0 0 24 46L33.500 29.500Z" fill="#2da94f"/><path d="M4.950 13A22 22 0 0 1 43.050 13H24Z" fill="#e33b2e"/><circle cx="24" cy="24" r="10" fill="#fff"/><circle cx="24" cy="24" r="8" fill="#4a8af4"/></svg>
<svg style="left:823.300px;top:555.300px" width="9" height="6" viewBox="0 0 9 6"><path d="M0.500 5.500L4.500 1L8.500 5.500" fill="none" stroke="#fff" stroke-width="1"/></svg>
<svg style="left:841.500px;top:555.800px" width="12" height="7.600" viewBox="0 0 24 15"><rect x="0.800" y="0.800" width="20" height="13.400" fill="none" stroke="#fff" stroke-width="1.600"/><rect x="2.500" y="2.500" width="11" height="10" fill="#fff"/><rect x="21.500" y="4.500" width="2" height="6" fill="#fff"/></svg>
<svg style="left:861.500px;top:553.800px" width="11" height="11" viewBox="0 0 22 22"><g fill="none" stroke="#9a9a9a" stroke-width="1.600"><path d="M2 20A18 18 0 0 1 20 2"/><path d="M7 20A13 13 0 0 1 20 7"/><path d="M12 20A8 8 0 0 1 20 12"/></g><circle cx="18" cy="18" r="2.200" fill="#fff"/></svg>
<svg style="left:878.500px;top:553.800px" width="13" height="11" viewBox="0 0 26 22"><path d="M1 7.500H5.500L11 2.500V19.500L5.500 14.500H1Z" fill="none" stroke="#fff" stroke-width="1.500"/><path d="M14.500 7.500A5 5 0 0 1 14.500 14.500M17.500 4.500A9 9 0 0 1 17.500 17.500M20.500 1.800A13 13 0 0 1 20.500 20.200" fill="none" stroke="#fff" stroke-width="1.400"/></svg>
<span id="t109" style="position:absolute;left:900.60px;top:553.14px;line-height:12.32px;font-size:8.8px;color:#fff;font-family:'Liberation Sans', sans-serif;white-space:pre;letter-spacing:-0.326px;">DEU</span>
<span id="t110" style="position:absolute;left:941.80px;top:546.32px;line-height:13.16px;font-size:9.4px;color:#fff;font-family:'Liberation Sans', sans-serif;white-space:pre;letter-spacing:-0.214px;">16:22</span>
<span id="t111" style="position:absolute;left:929.00px;top:561.02px;line-height:13.16px;font-size:9.4px;color:#fff;font-family:'Liberation Sans', sans-serif;white-space:pre;letter-spacing:0.028px;">29.03.2020</span>
<svg style="left:991px;top:552.500px" width="20" height="20" viewBox="0 0 40 40"><path d="M1 1H26V20H13L6 27V20H1Z" fill="#fff"/><path d="M5 6H22M5 10.500H22M5 15H22" stroke="#1b1b1e" stroke-width="1.500"/><circle cx="25" cy="25" r="11.500" fill="#1b1b1e" stroke="#fff" stroke-width="1.300"/><text x="25" y="30.500" font-family="Liberation Sans, sans-serif" font-size="17" fill="#fff" text-anchor="middle">8</text></svg>
<div style="position:absolute;left:1019.8px;top:544.2px;width:0.6px;height:32px;background:#555;"></div>
</div></body></html>
